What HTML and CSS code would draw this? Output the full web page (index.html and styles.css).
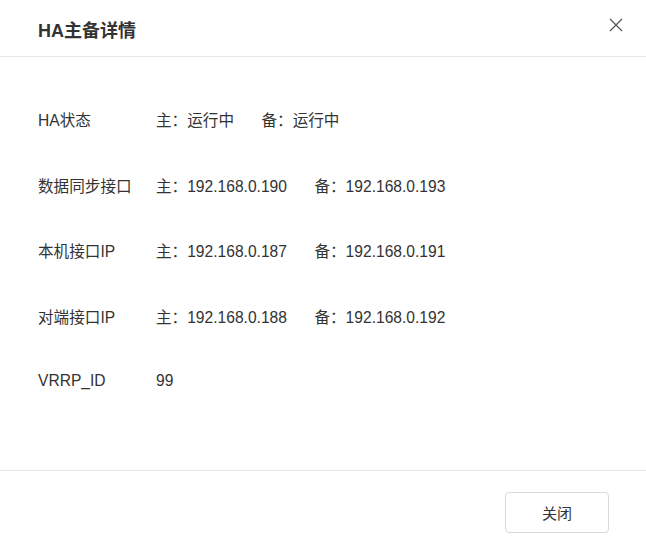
FILE: index.html
```html
<!DOCTYPE html>
<html lang="zh-CN">
<head>
<meta charset="utf-8">
<title>HA主备详情</title>
<link rel="stylesheet" href="styles.css">
</head>
<body>
<div class="dialog">
  <div class="header">
    <h2 class="title">HA主备详情</h2>
    <button class="close" aria-label="关闭">
      <svg width="14" height="14" viewBox="0 0 14 14"><path d="M1 1L13 13M13 1L1 13" stroke="#555" stroke-width="1.2" fill="none"/></svg>
    </button>
  </div>
  <div class="body">
    <div class="row"><span class="label">HA状态</span><span class="val">主：运行中</span><span class="val">备：运行中</span></div>
    <div class="row"><span class="label">数据同步接口</span><span class="val">主：192.168.0.190</span><span class="val">备：192.168.0.193</span></div>
    <div class="row"><span class="label">本机接口IP</span><span class="val">主：192.168.0.187</span><span class="val">备：192.168.0.191</span></div>
    <div class="row"><span class="label">对端接口IP</span><span class="val">主：192.168.0.188</span><span class="val">备：192.168.0.192</span></div>
    <div class="row"><span class="label">VRRP_ID</span><span class="val">99</span></div>
  </div>
  <div class="footer">
    <button class="btn">关闭</button>
  </div>
</div>
</body>
</html>
```
FILE: styles.css
```css
html, body {
  margin: 0;
  padding: 0;
  background: #fff;
}
body {
  font-family: "Liberation Sans", "Noto Sans CJK SC", sans-serif;
  color: #333;
}
.dialog {
  width: 646px;
  height: 549px;
  display: flex;
  flex-direction: column;
}
.header {
  height: 57px;
  box-sizing: border-box;
  border-bottom: 1px solid #e6e6ec;
  display: flex;
  align-items: flex-start;
  justify-content: space-between;
  padding: 19px 22px 0 38px;
}
.title {
  margin: 0;
  font-size: 18px;
  line-height: 24px;
  font-weight: bold;
  color: #333;
}
.close {
  border: none;
  background: none;
  padding: 0;
  width: 16px;
  height: 16px;
  display: flex;
  align-items: center;
  justify-content: center;
  margin-top: -2px;
}
.body {
  flex: 1;
  padding: 29.5px 38px 0 38px;
}
.row {
  display: flex;
  align-items: center;
  height: 65.5px;
  font-size: 15.6px;
}
.label {
  width: 118px;
  flex: none;
}
.val {
  margin-right: 27.5px;
}
.footer {
  height: 79px;
  box-sizing: border-box;
  border-top: 1px solid #e6e6ec;
  display: flex;
  justify-content: flex-end;
  align-items: flex-start;
  padding: 21px 37px 0 0;
}
.btn {
  width: 104px;
  height: 41px;
  border: 1px solid #d9d9d9;
  border-radius: 4px;
  background: #fff;
  font-family: "Liberation Sans", "Noto Sans CJK SC", sans-serif;
  font-size: 15px;
  color: #333;
}
```
